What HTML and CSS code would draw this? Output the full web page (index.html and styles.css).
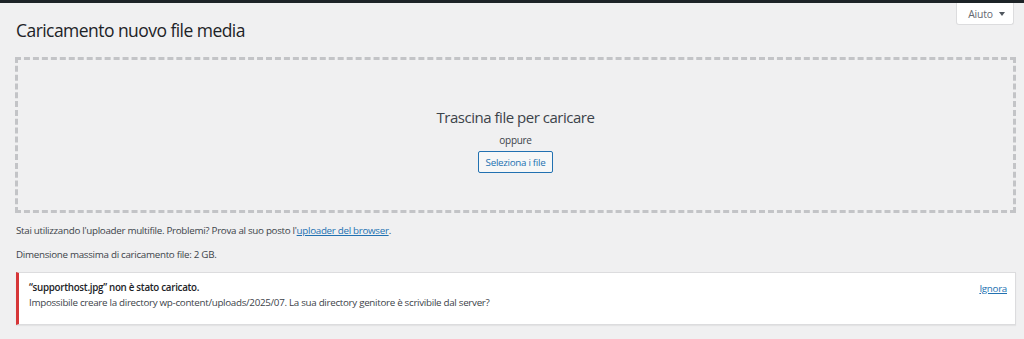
FILE: index.html
```html
<!DOCTYPE html>
<html lang="it">
<head>
<meta charset="utf-8">
<title>Caricamento nuovo file media</title>
<link rel="stylesheet" href="styles.css">
</head>
<body>
<div class="adminbar"></div>
<button class="help-tab" type="button">Aiuto <span class="caret"></span></button>
<main class="wrap">
  <h1 class="page-title">Caricamento nuovo file media</h1>
  <section class="dropzone">
    <p class="drop-title">Trascina file per caricare</p>
    <p class="drop-or">oppure</p>
    <button class="select-btn" type="button">Seleziona i file</button>
  </section>
  <p class="info first">Stai utilizzando l'uploader multifile. Problemi? Prova al suo posto l'<a href="#" class="link">uploader del browser</a>.</p>
  <p class="info second">Dimensione massima di caricamento file: 2 GB.</p>
  <div class="notice">
    <div class="notice-text">
      <strong class="notice-title">“supporthost.jpg” non è stato caricato.</strong>
      <span class="notice-msg">Impossibile creare la directory wp-content/uploads/2025/07. La sua directory genitore è scrivibile dal server?</span>
    </div>
    <a href="#" class="link dismiss">Ignora</a>
  </div>
</main>
</body>
</html>
```
FILE: styles.css
```css
html, body {
  margin: 0;
  padding: 0;
}
body {
  background: #f0f0f1;
  color: #3c434a;
  font-family: "Open Sans", "Noto Sans", sans-serif;
  font-size: 9.8px;
  letter-spacing: -0.3px;
  line-height: 1.5;
  position: relative;
  height: 339px;
  overflow: hidden;
}
.adminbar {
  height: 3px;
  background: #1d2327;
}
.help-tab {
  position: absolute;
  top: 3px;
  right: 10px;
  width: 58px;
  height: 22px;
  background: #fff;
  border: 1px solid #dcdcde;
  border-top: none;
  border-radius: 0 0 3px 3px;
  color: #646970;
  font-family: inherit;
  font-size: 10.4px;
  letter-spacing: -0.2px;
  padding: 0 0 0 3px;
  display: flex;
  align-items: center;
  justify-content: center;
  gap: 6px;
}
.caret {
  width: 0;
  height: 0;
  border-left: 3.5px solid transparent;
  border-right: 3.5px solid transparent;
  border-top: 4px solid #50575e;
}
.wrap {
  padding: 0 8px 0 16px;
  display: flex;
  flex-direction: column;
}
.page-title {
  margin: 15px 0 0;
  font-size: 17.5px;
  letter-spacing: -0.55px;
  font-weight: 400;
  line-height: 24px;
  color: #1d2327;
}
.dropzone {
  margin: 15px 0 0 -1px;
  border: 3px dashed #c3c4c7;
  display: flex;
  flex-direction: column;
  align-items: center;
  padding-top: 46px;
  box-sizing: content-box;
  height: 104px;
}
.drop-title {
  margin: 0;
  font-size: 15px;
  letter-spacing: -0.48px;
  line-height: 22px;
  color: #3c434a;
}
.drop-or {
  margin: 4px 0 0;
  line-height: 16px;
  font-size: 10px;
}
.select-btn {
  margin-top: 3px;
  height: 22px;
  padding: 0 7px;
  background: #f6f7f7;
  border: 1px solid #2271b1;
  border-radius: 2px;
  color: #2271b1;
  font-family: inherit;
  font-size: 9.8px;
  letter-spacing: -0.3px;
}
.info {
  margin: 0;
  line-height: 16px;
}
.info.first {
  margin-top: 10px;
}
.info.second {
  margin-top: 8px;
}
.link {
  color: #2271b1;
  text-decoration: underline;
}
.notice {
  margin-top: 9px;
  background: #fff;
  border: 1px solid #dcdcde;
  border-left: 3px solid #d63638;
  box-shadow: 0 1px 1px rgba(0, 0, 0, 0.05);
  height: 51px;
  box-sizing: content-box;
  display: flex;
  justify-content: space-between;
  align-items: flex-start;
  padding: 0 8px 0 10px;
}
.notice-text {
  display: flex;
  flex-direction: column;
  padding-top: 7px;
  line-height: 15px;
}
.notice-title {
  font-weight: 600;
  color: #1d2327;
}
.dismiss {
  margin-top: 8px;
  line-height: 15px;
}
```
